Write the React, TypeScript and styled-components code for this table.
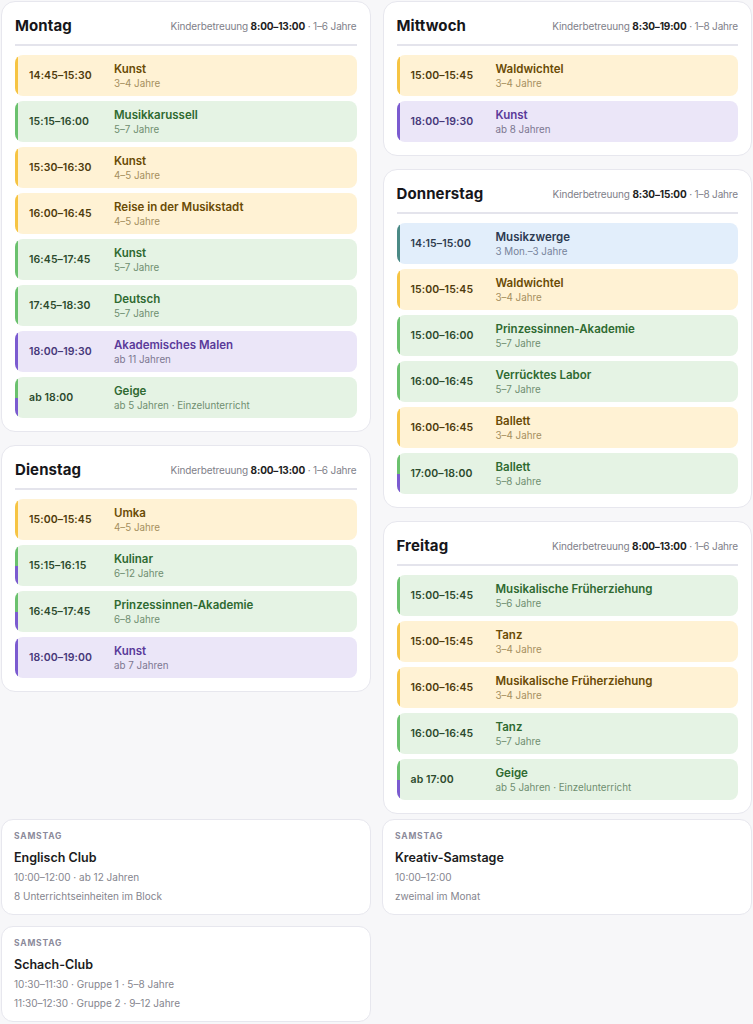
import React from 'react';
import styled, { createGlobalStyle, css } from 'styled-components';

const GlobalStyle = createGlobalStyle`
  html, body {
    margin: 0;
    padding: 0;
    background: #f7f7f9;
  }
  body {
    font-family: Inter, "Noto Sans", "Liberation Sans", sans-serif;
    color: #1b1b1f;
    -webkit-font-smoothing: antialiased;
  }
`;

type Tone = 'yellow' | 'green' | 'purple' | 'blue' | 'mixed';

const tones: Record<Tone, { bg: string; bar: string; title: string; time: string; sub: string }> = {
  yellow: { bg: '#fff2d4', bar: '#f6c443', title: '#6a4b05', time: '#4e3b0c', sub: '#a58f5e' },
  green: { bg: '#e5f3e4', bar: '#6bc16e', title: '#2f6a31', time: '#2c4a2d', sub: '#6f8e70' },
  purple: { bg: '#ebe6f8', bar: '#7b5bd0', title: '#5a3a9a', time: '#46387a', sub: '#7c7690' },
  blue: { bg: '#e2eefb', bar: '#4b8a86', title: '#2d3b52', time: '#2d3a4c', sub: '#77839a' },
  mixed: { bg: '#e5f3e4', bar: '#6bc16e', title: '#2f6a31', time: '#2c4a2d', sub: '#6f8e70' },
};

const Page = styled.div`
  padding: 1px 1px 2px 1px;
`;

const Columns = styled.div`
  display: grid;
  grid-template-columns: 1fr 1fr;
  column-gap: 12px;
  align-items: start;
`;

const Column = styled.div`
  display: flex;
  flex-direction: column;
  gap: 13px;
`;

const DayCard = styled.section`
  background: #fff;
  border: 1px solid #e7e7ee;
  border-radius: 14px;
  padding: 14px 13px 13px 13px;
`;

const DayHeader = styled.header`
  display: flex;
  align-items: flex-start;
  justify-content: space-between;
  height: 30px;
  box-sizing: border-box;
  padding-top: 1px;
  border-bottom: 2px solid #e4e4ec;
  margin-bottom: 9px;
`;

const DayName = styled.h2`
  margin: 0;
  font-size: 15px;
  font-weight: 700;
  color: #16161a;
  letter-spacing: 0.1px;
  line-height: 18px;
`;

const Care = styled.span`
  font-size: 10px;
  line-height: 18px;
  color: #808089;
  letter-spacing: -0.15px;
  b {
    color: #1d1d22;
    font-weight: 700;
  }
`;

const RowList = styled.div`
  display: flex;
  flex-direction: column;
  gap: 5px;
`;

const Row = styled.div<{ $tone: Tone }>`
  position: relative;
  display: flex;
  align-items: center;
  height: 41px;
  box-sizing: border-box;
  border-radius: 8px;
  overflow: hidden;
  background: ${({ $tone }) => tones[$tone].bg};
  padding-left: 14px;
  &::before {
    content: '';
    position: absolute;
    left: 0;
    top: 0;
    bottom: 0;
    width: 3px;
    ${({ $tone }) =>
      $tone === 'mixed'
        ? css`background: linear-gradient(#6bc16e 0 50%, #7b5bd0 50% 100%);`
        : css`background: ${tones[$tone].bar};`}
  }
`;

const Time = styled.div<{ $tone: Tone }>`
  width: 85px;
  flex: none;
  font-size: 10.5px;
  font-weight: 600;
  color: ${({ $tone }) => tones[$tone].time};
  letter-spacing: 0.1px;
`;

const Info = styled.div`
  display: flex;
  flex-direction: column;
`;

const Title = styled.div<{ $tone: Tone }>`
  font-size: 11.5px;
  font-weight: 600;
  line-height: 15px;
  color: ${({ $tone }) => tones[$tone].title};
`;

const Sub = styled.div<{ $tone: Tone }>`
  font-size: 9.8px;
  line-height: 13px;
  color: ${({ $tone }) => tones[$tone].sub};
`;

const ExtraGrid = styled.div`
  display: grid;
  grid-template-columns: 1fr 1fr;
  column-gap: 11px;
  row-gap: 11px;
  margin-top: 5px;
`;

const ExtraCard = styled.section`
  background: #fff;
  border: 1px solid #e7e7ee;
  border-radius: 12px;
  height: 96px;
  box-sizing: border-box;
  padding: 11px 12px 10px 12px;
`;

const ExtraLabel = styled.div`
  font-size: 8.5px;
  font-weight: 700;
  letter-spacing: 0.8px;
  color: #8b8a9b;
  line-height: 11px;
`;

const ExtraTitle = styled.div`
  font-size: 12.5px;
  font-weight: 600;
  color: #1b1b20;
  margin-top: 8px;
  line-height: 16px;
`;

const ExtraLine = styled.div`
  font-size: 10px;
  color: #85858e;
  line-height: 13px;
  margin-top: 5px;
  & + & {
    margin-top: 6px;
  }
`;

type Lesson = { time: string; title: string; sub: string; tone: Tone };
type Day = { name: string; care: string; ages: string; lessons: Lesson[] };

const monday: Day = {
  name: 'Montag',
  care: '8:00–13:00',
  ages: '1–6 Jahre',
  lessons: [
    { time: '14:45–15:30', title: 'Kunst', sub: '3–4 Jahre', tone: 'yellow' },
    { time: '15:15–16:00', title: 'Musikkarussell', sub: '5–7 Jahre', tone: 'green' },
    { time: '15:30–16:30', title: 'Kunst', sub: '4–5 Jahre', tone: 'yellow' },
    { time: '16:00–16:45', title: 'Reise in der Musikstadt', sub: '4–5 Jahre', tone: 'yellow' },
    { time: '16:45–17:45', title: 'Kunst', sub: '5–7 Jahre', tone: 'green' },
    { time: '17:45–18:30', title: 'Deutsch', sub: '5–7 Jahre', tone: 'green' },
    { time: '18:00–19:30', title: 'Akademisches Malen', sub: 'ab 11 Jahren', tone: 'purple' },
    { time: 'ab 18:00', title: 'Geige', sub: 'ab 5 Jahren · Einzelunterricht', tone: 'mixed' },
  ],
};

const tuesday: Day = {
  name: 'Dienstag',
  care: '8:00–13:00',
  ages: '1–6 Jahre',
  lessons: [
    { time: '15:00–15:45', title: 'Umka', sub: '4–5 Jahre', tone: 'yellow' },
    { time: '15:15–16:15', title: 'Kulinar', sub: '6–12 Jahre', tone: 'mixed' },
    { time: '16:45–17:45', title: 'Prinzessinnen-Akademie', sub: '6–8 Jahre', tone: 'mixed' },
    { time: '18:00–19:00', title: 'Kunst', sub: 'ab 7 Jahren', tone: 'purple' },
  ],
};

const wednesday: Day = {
  name: 'Mittwoch',
  care: '8:30–19:00',
  ages: '1–8 Jahre',
  lessons: [
    { time: '15:00–15:45', title: 'Waldwichtel', sub: '3–4 Jahre', tone: 'yellow' },
    { time: '18:00–19:30', title: 'Kunst', sub: 'ab 8 Jahren', tone: 'purple' },
  ],
};

const thursday: Day = {
  name: 'Donnerstag',
  care: '8:30–15:00',
  ages: '1–8 Jahre',
  lessons: [
    { time: '14:15–15:00', title: 'Musikzwerge', sub: '3 Mon.–3 Jahre', tone: 'blue' },
    { time: '15:00–15:45', title: 'Waldwichtel', sub: '3–4 Jahre', tone: 'yellow' },
    { time: '15:00–16:00', title: 'Prinzessinnen-Akademie', sub: '5–7 Jahre', tone: 'green' },
    { time: '16:00–16:45', title: 'Verrücktes Labor', sub: '5–7 Jahre', tone: 'green' },
    { time: '16:00–16:45', title: 'Ballett', sub: '3–4 Jahre', tone: 'yellow' },
    { time: '17:00–18:00', title: 'Ballett', sub: '5–8 Jahre', tone: 'mixed' },
  ],
};

const friday: Day = {
  name: 'Freitag',
  care: '8:00–13:00',
  ages: '1–6 Jahre',
  lessons: [
    { time: '15:00–15:45', title: 'Musikalische Früherziehung', sub: '5–6 Jahre', tone: 'green' },
    { time: '15:00–15:45', title: 'Tanz', sub: '3–4 Jahre', tone: 'yellow' },
    { time: '16:00–16:45', title: 'Musikalische Früherziehung', sub: '3–4 Jahre', tone: 'yellow' },
    { time: '16:00–16:45', title: 'Tanz', sub: '5–7 Jahre', tone: 'green' },
    { time: 'ab 17:00', title: 'Geige', sub: 'ab 5 Jahren · Einzelunterricht', tone: 'mixed' },
  ],
};

const saturday = [
  { title: 'Englisch Club', lines: ['10:00–12:00 · ab 12 Jahren', '8 Unterrichtseinheiten im Block'] },
  { title: 'Kreativ-Samstage', lines: ['10:00–12:00', 'zweimal im Monat'] },
  { title: 'Schach-Club', lines: ['10:30–11:30 · Gruppe 1 · 5–8 Jahre', '11:30–12:30 · Gruppe 2 · 9–12 Jahre'] },
];

const DayBlock = ({ day }: { day: Day }) => (
  <DayCard>
    <DayHeader>
      <DayName>{day.name}</DayName>
      <Care>
        Kinderbetreuung <b>{day.care}</b> · {day.ages}
      </Care>
    </DayHeader>
    <RowList>
      {day.lessons.map((l, i) => (
        <Row key={i} $tone={l.tone}>
          <Time $tone={l.tone}>{l.time}</Time>
          <Info>
            <Title $tone={l.tone}>{l.title}</Title>
            <Sub $tone={l.tone}>{l.sub}</Sub>
          </Info>
        </Row>
      ))}
    </RowList>
  </DayCard>
);

export default function App() {
  return (
    <Page>
      <GlobalStyle />
      <Columns>
        <Column>
          <DayBlock day={monday} />
          <DayBlock day={tuesday} />
        </Column>
        <Column>
          <DayBlock day={wednesday} />
          <DayBlock day={thursday} />
          <DayBlock day={friday} />
        </Column>
      </Columns>
      <ExtraGrid>
        {saturday.map((s) => (
          <ExtraCard key={s.title}>
            <ExtraLabel>SAMSTAG</ExtraLabel>
            <ExtraTitle>{s.title}</ExtraTitle>
            {s.lines.map((line) => (
              <ExtraLine key={line}>{line}</ExtraLine>
            ))}
          </ExtraCard>
        ))}
      </ExtraGrid>
    </Page>
  );
}
